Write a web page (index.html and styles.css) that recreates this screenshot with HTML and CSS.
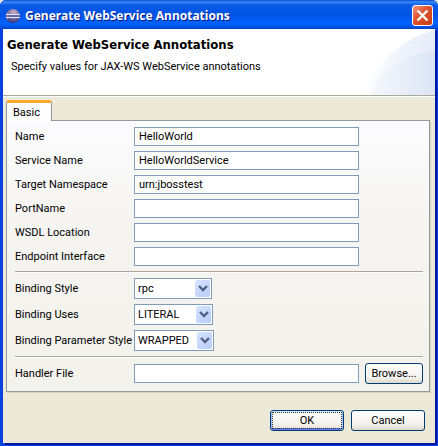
FILE: index.html
```html
<!DOCTYPE html>
<html lang="en">
<head>
<meta charset="utf-8">
<title>Generate WebService Annotations</title>
<link rel="stylesheet" href="styles.css">
</head>
<body>
<form class="window">
  <header class="titlebar">
    <svg class="logo" viewBox="0 0 16 16" aria-hidden="true">
      <defs>
        <radialGradient id="orb" cx="0.55" cy="0.25" r="0.8">
          <stop offset="0" stop-color="#c9b3c8"/>
          <stop offset="0.5" stop-color="#7d74ac"/>
          <stop offset="1" stop-color="#29266f"/>
        </radialGradient>
      </defs>
      <circle cx="8" cy="8" r="7" fill="url(#orb)"/>
      <path d="M4 2.5A7 7 0 0 0 4 13.5A9 9 0 0 1 4 2.5Z" fill="#d9a3a0"/>
      <path d="M1 6.5h14M1 9.5h14" stroke="#e4e6f5"/>
      <path d="M2 8h12" stroke="#5f68a8" stroke-width="2"/>
    </svg>
    <span class="caption">Generate WebService Annotations</span>
    <button class="close" type="button" aria-label="Close">
      <svg viewBox="0 0 19 19" aria-hidden="true"><path d="M4.5 4.5l10 10M14.5 4.5l-10 10" stroke="#fff" stroke-width="2.4"/></svg>
    </button>
  </header>
  <div class="client">
    <section class="banner">
      <svg class="swoosh" viewBox="0 0 73 66" aria-hidden="true">
        <defs>
          <linearGradient id="arc" x1="0" x2="1">
            <stop offset="0" stop-color="#fff"/>
            <stop offset="0.6" stop-color="#eef2fb"/>
            <stop offset="1" stop-color="#e6ecf8"/>
          </linearGradient>
          <linearGradient id="arc2" x1="0" x2="1">
            <stop offset="0" stop-color="#f6f8fd"/>
            <stop offset="1" stop-color="#dce5f5"/>
          </linearGradient>
        </defs>
        <path d="M0 66C12 37 38 10 73 1V66Z" fill="url(#arc)"/>
        <path d="M7 66C18 42 43 25 73 22V66Z" fill="url(#arc2)"/>
      </svg>
      <h1>Generate WebService Annotations</h1>
      <p>Specify values for JAX-WS WebService annotations</p>
    </section>
    <main class="content">
      <div class="tabs"><button class="tab" type="button">Basic</button></div>
      <div class="panel">
        <div class="fields">
          <label for="name">Name</label><input id="name" type="text" value="HelloWorld">
          <label for="service">Service Name</label><input id="service" type="text" value="HelloWorldService">
          <label for="ns">Target Namespace</label><input id="ns" type="text" value="urn:jbosstest">
          <label for="port">PortName</label><input id="port" type="text">
          <label for="wsdl">WSDL Location</label><input id="wsdl" type="text">
          <label for="endpoint">Endpoint Interface</label><input id="endpoint" type="text">
        </div>
        <hr>
        <div class="fields">
          <label for="style">Binding Style</label>
          <span class="combo combo-s"><select id="style"><option>rpc</option></select><svg viewBox="0 0 15 17" aria-hidden="true"><path d="M4 6l4 4 4-4" fill="none" stroke="#4d6185" stroke-width="2.4"/></svg></span>
          <label for="uses">Binding Uses</label>
          <span class="combo combo-m"><select id="uses"><option>LITERAL</option></select><svg viewBox="0 0 15 17" aria-hidden="true"><path d="M4 6l4 4 4-4" fill="none" stroke="#4d6185" stroke-width="2.4"/></svg></span>
          <label for="param">Binding Parameter Style</label>
          <span class="combo combo-l"><select id="param"><option>WRAPPED</option></select><svg viewBox="0 0 15 17" aria-hidden="true"><path d="M4 6l4 4 4-4" fill="none" stroke="#4d6185" stroke-width="2.4"/></svg></span>
        </div>
        <hr>
        <div class="fields">
          <label for="handler">Handler File</label><input id="handler" type="text">
          <button class="push" type="button">Browse...</button>
        </div>
      </div>
      <footer class="actions">
        <button class="push wide default" type="button">OK</button>
        <button class="push wide" type="button">Cancel</button>
      </footer>
    </main>
  </div>
</form>
</body>
</html>
```
FILE: styles.css
```css
* { box-sizing: border-box; }

body {
  margin: 0;
  background: #ece9d8;
}

body, input, select, button {
  font-family: Roboto, "DejaVu Sans Condensed", sans-serif;
  font-size: 11px;
  line-height: 15px;
  color: #000;
}

.window {
  display: flex;
  flex-direction: column;
  min-height: 100vh;
  border-radius: 6px 6px 0 0;
  background: #0a3fe0;
}

.titlebar {
  display: flex;
  align-items: center;
  height: 29px;
  padding: 2px 5px 0 5px;
  border-radius: 6px 6px 0 0;
  background: linear-gradient(#0a4fc8 0, #3a8bff 2px, #0a5ae8 5px, #0053e4 14px, #0062fb 23px, #0058ee 26px, #0040c8 29px);
}

.logo { width: 16px; height: 16px; }

.caption {
  flex: 1;
  margin-left: 4px;
  font-family: "Noto Sans", sans-serif;
  font-size: 12px;
  font-weight: bold;
  color: #fff;
  text-shadow: 1px 1px 0 #0a1883;
  white-space: nowrap;
}

.close {
  width: 21px;
  height: 21px;
  padding: 0;
  border: 1px solid #fff;
  border-radius: 3px;
  background: linear-gradient(135deg, #f0987c, #e0512c 45%, #c63c14);
}

.close svg { display: block; width: 19px; height: 19px; }

.client {
  flex: 1;
  display: flex;
  flex-direction: column;
  margin: 0 3px;
  margin-bottom: 3px;
  box-shadow: 2px 2px 0 #0018a0;
  background: #ece9d8;
}

.banner {
  position: relative;
  height: 67px;
  padding: 7px 4px;
  border-bottom: 1px solid #aca899;
  background: #fff;
}

.swoosh {
  position: absolute;
  right: 0;
  bottom: 0;
  width: 73px;
  height: 66px;
}

h1 {
  margin: 0;
  font-family: "DejaVu Sans Condensed", sans-serif;
  font-size: 13px;
  line-height: 17px;
}

.banner p { margin: 6px 0 0 4px; }

.content {
  flex: 1;
  display: flex;
  flex-direction: column;
  padding: 3px 5px 0 3px;
  border-top: 1px solid #fff;
}

.tabs { display: flex; height: 20px; }

.tab {
  position: relative;
  z-index: 1;
  width: 46px;
  height: 21px;
  padding: 0 0 0 6px;
  border: 1px solid #919b9c;
  border-top: 3px solid #ffa82a;
  border-bottom: 0;
  border-radius: 3px 3px 0 0;
  background: #fdfdfe;
  text-align: left;
}

.panel {
  padding: 6px 6px 7px 8px;
  border: 1px solid #919b9c;
  box-shadow: 1px 1px 0 #d5d2c0;
  background: linear-gradient(#fcfcfe, #f5f4f1 40%, #f3f2ec);
}

.fields {
  display: grid;
  grid-template-columns: 119px minmax(0, 225px) auto;
  row-gap: 5px;
  align-items: center;
}

.fields label {
  grid-column: 1;
  white-space: nowrap;
}

.fields input {
  width: 100%;
  height: 19px;
  padding: 0 4px;
  border: 1px solid #7f9db9;
  background: #fff;
}

hr {
  height: 2px;
  margin: 5px 0;
  border: 0;
  border-top: 1px solid #aca899;
  border-bottom: 1px solid #fff;
}

.combo { position: relative; height: 21px; }
.combo-s { width: 78px; }
.combo-m { width: 79px; }
.combo-l { width: 80px; }

.combo select {
  display: block;
  width: 100%;
  height: 21px;
  padding: 0 0 0 3px;
  border: 1px solid #7f9db9;
  border-radius: 0;
  background: #fff;
  appearance: none;
}

.combo svg {
  position: absolute;
  top: 2px;
  right: 2px;
  width: 15px;
  height: 17px;
  border-radius: 2px;
  background: linear-gradient(135deg, #d8e4fe, #b7cbfa);
  pointer-events: none;
}

.push {
  height: 21px;
  min-width: 57px;
  padding: 0 3px;
  border: 1px solid #003c74;
  border-radius: 3px;
  background: linear-gradient(#fff, #f3f2ed 70%, #dcd8cb);
}

.fields .push { margin-left: 6px; }

.wide { width: 74px; }

.default {
  position: relative;
  box-shadow: inset 0 1px 0 #cee7ff, inset 1px 0 0 #9bb8f0, inset -1px 0 0 #9bb8f0, inset 0 -2px 0 #6982ee;
}

.default::after {
  content: "";
  position: absolute;
  inset: 1px;
  border: 1px dotted #333;
}

.actions {
  display: flex;
  justify-content: flex-end;
  gap: 7px;
  padding: 18px 5px 12px;
}
```
